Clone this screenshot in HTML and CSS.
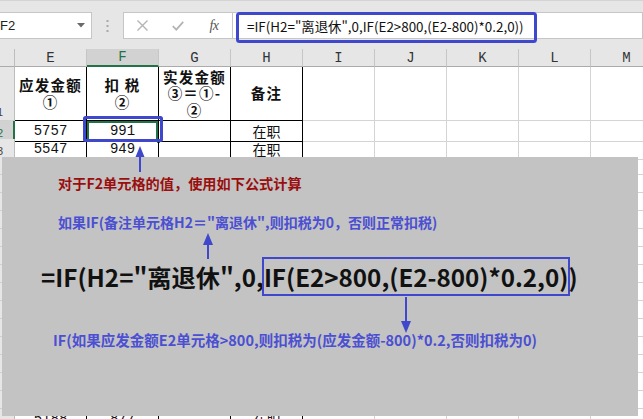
FILE: index.html
```html
<!DOCTYPE html>
<html lang="zh">
<head>
<meta charset="utf-8">
<title>Excel formula</title>
<link rel="stylesheet" href="styles.css">
</head>
<body>
<div class="toolbar">
  <div class="namebox"><span class="nb-text">F2</span>
    <svg class="caret" width="8" height="5" viewBox="0 0 8 5"><path d="M0 0H8L4 4.5Z" fill="#6a6a6a"/></svg>
  </div>
  <div class="sep"><svg width="3" height="12" viewBox="0 0 3 12"><rect x="0.5" y="0" width="2" height="2" fill="#a8a8a8"/><rect x="0.5" y="5" width="2" height="2" fill="#a8a8a8"/><rect x="0.5" y="10" width="2" height="2" fill="#a8a8a8"/></svg></div>
  <div class="fbtns">
    <span class="btn"><svg width="11" height="11" viewBox="0 0 11 11"><path d="M0.5 0.5L10.5 10.5M10.5 0.5L0.5 10.5" stroke="#b4b4b4" stroke-width="1.4"/></svg></span>
    <span class="btn"><svg width="12" height="10" viewBox="0 0 12 10"><path d="M0.8 5.2L4.3 8.6L11.2 0.8" stroke="#b4b4b4" stroke-width="1.8" fill="none"/></svg></span>
    <span class="btn fx">fx</span>
  </div>
  <div class="fbar"><span class="ftext">=IF(H2="离退休",0,IF(E2&gt;800,(E2-800)*0.2,0))</span></div>
</div>

<div class="sheet">
  <div class="row hdr">
    <div class="rh"></div>
    <div class="ch">E</div><div class="ch sel">F</div><div class="ch">G</div><div class="ch">H</div><div class="ch">I</div><div class="ch">J</div><div class="ch">K</div><div class="ch">L</div><div class="ch">M</div>
  </div>
  <div class="row r1">
    <div class="rh"><span>1</span></div>
    <div class="c t th"><span>应发金额</span><span>①</span></div>
    <div class="c t th"><span>扣&nbsp;税</span><span>②</span></div>
    <div class="c t th th3"><span>实发金额</span><span>③＝①-</span><span>②</span></div>
    <div class="c t th"><span>备注</span></div>
    <div class="c"></div><div class="c"></div><div class="c"></div><div class="c"></div><div class="c"></div>
  </div>
  <div class="row">
    <div class="rh rsel"><span>2</span></div>
    <div class="c t num">5757</div><div class="c t num cur">991<i class="handle"></i></div><div class="c t"></div><div class="c t cj">在职</div>
    <div class="c"></div><div class="c"></div><div class="c"></div><div class="c"></div><div class="c"></div>
  </div>
  <div class="row">
    <div class="rh"><span>3</span></div>
    <div class="c t num">5547</div><div class="c t num">949</div><div class="c t"></div><div class="c t cj">在职</div>
    <div class="c"></div><div class="c"></div><div class="c"></div><div class="c"></div><div class="c"></div>
  </div>
  <div class="row"><div class="rh"></div><div class="c t"></div><div class="c t"></div><div class="c t"></div><div class="c t"></div><div class="c"></div><div class="c"></div><div class="c"></div><div class="c"></div><div class="c"></div></div>
  <div class="row"><div class="rh"></div><div class="c t"></div><div class="c t"></div><div class="c t"></div><div class="c t"></div><div class="c"></div><div class="c"></div><div class="c"></div><div class="c"></div><div class="c"></div></div>
  <div class="row"><div class="rh"></div><div class="c t"></div><div class="c t"></div><div class="c t"></div><div class="c t"></div><div class="c"></div><div class="c"></div><div class="c"></div><div class="c"></div><div class="c"></div></div>
  <div class="row"><div class="rh"></div><div class="c t"></div><div class="c t"></div><div class="c t"></div><div class="c t"></div><div class="c"></div><div class="c"></div><div class="c"></div><div class="c"></div><div class="c"></div></div>
  <div class="row"><div class="rh"></div><div class="c t"></div><div class="c t"></div><div class="c t"></div><div class="c t"></div><div class="c"></div><div class="c"></div><div class="c"></div><div class="c"></div><div class="c"></div></div>
  <div class="row"><div class="rh"></div><div class="c t"></div><div class="c t"></div><div class="c t"></div><div class="c t"></div><div class="c"></div><div class="c"></div><div class="c"></div><div class="c"></div><div class="c"></div></div>
  <div class="row"><div class="rh"></div><div class="c t"></div><div class="c t"></div><div class="c t"></div><div class="c t"></div><div class="c"></div><div class="c"></div><div class="c"></div><div class="c"></div><div class="c"></div></div>
  <div class="row"><div class="rh"></div><div class="c t"></div><div class="c t"></div><div class="c t"></div><div class="c t"></div><div class="c"></div><div class="c"></div><div class="c"></div><div class="c"></div><div class="c"></div></div>
  <div class="row"><div class="rh"></div><div class="c t"></div><div class="c t"></div><div class="c t"></div><div class="c t"></div><div class="c"></div><div class="c"></div><div class="c"></div><div class="c"></div><div class="c"></div></div>
  <div class="row"><div class="rh"></div><div class="c t"></div><div class="c t"></div><div class="c t"></div><div class="c t"></div><div class="c"></div><div class="c"></div><div class="c"></div><div class="c"></div><div class="c"></div></div>
  <div class="row"><div class="rh"></div><div class="c t"></div><div class="c t"></div><div class="c t"></div><div class="c t"></div><div class="c"></div><div class="c"></div><div class="c"></div><div class="c"></div><div class="c"></div></div>
  <div class="row"><div class="rh"></div><div class="c t"></div><div class="c t"></div><div class="c t"></div><div class="c t"></div><div class="c"></div><div class="c"></div><div class="c"></div><div class="c"></div><div class="c"></div></div>
  <div class="row"><div class="rh"></div><div class="c t"></div><div class="c t"></div><div class="c t"></div><div class="c t"></div><div class="c"></div><div class="c"></div><div class="c"></div><div class="c"></div><div class="c"></div></div>
  <div class="row"><div class="rh"></div><div class="c t"></div><div class="c t"></div><div class="c t"></div><div class="c t"></div><div class="c"></div><div class="c"></div><div class="c"></div><div class="c"></div><div class="c"></div></div>
  <div class="row"><div class="rh"></div><div class="c t num">5188</div><div class="c t num">877</div><div class="c t"></div><div class="c t cj">在职</div><div class="c"></div><div class="c"></div><div class="c"></div><div class="c"></div><div class="c"></div></div>
</div>

<div class="overlay">
  <p class="note1">对于F2单元格的值，使用如下公式计算</p>
  <p class="note2">如果IF(备注单元格H2＝"离退休",则扣税为0，否则正常扣税)</p>
  <p class="big">=IF(H2="离退休",0,<span class="hl">IF(E2&gt;800,(E2-800)*0.2,0)</span>)</p>
  <p class="note4">IF(如果应发金额E2单元格&gt;800,则扣税为(应发金额-800)*0.2,否则扣税为0)</p>
</div>

<svg class="marks" width="643" height="419" viewBox="0 0 643 419">
  <rect x="237.5" y="13.5" width="298" height="28" rx="2" fill="none" stroke="#3f48cc" stroke-width="3"/>
  <rect x="84.5" y="117.5" width="77" height="23" rx="1" fill="none" stroke="#3f48cc" stroke-width="3"/>
  <path d="M140 154V172" stroke="#3f48cc" stroke-width="2"/>
  <path d="M140 146L135.5 157H144.5Z" fill="#3f48cc"/>
  <path d="M208 242V259" stroke="#3f48cc" stroke-width="2"/>
  <path d="M208 233L203 245H213Z" fill="#3f48cc"/>
  <path d="M406 297V322" stroke="#3f48cc" stroke-width="2"/>
  <path d="M406 333L401 321H411Z" fill="#3f48cc"/>
</svg>
</body>
</html>
```

FILE: styles.css
```css
* { box-sizing: border-box; margin: 0; padding: 0; }
html, body { width: 643px; height: 419px; overflow: hidden; }
body {
  position: relative;
  background: #e6e6e6;
  font-family: "Noto Sans CJK SC", "Liberation Sans", sans-serif;
  color: #111;
}

/* ---------- formula toolbar ---------- */
.toolbar {
  height: 49px;
  display: flex;
  align-items: flex-start;
  padding-top: 11px;
  border-top: 1px solid #d4d4d4;
}
.namebox {
  margin-left: -20px;
  width: 112px;
  height: 27px;
  background: #fff;
  border: 1px solid #c6c6c6;
  display: flex;
  align-items: center;
  padding-left: 19px;
  font: 13px "Liberation Sans", sans-serif;
  color: #222;
}
.caret { margin-left: auto; margin-right: 6px; }
.sep {
  width: 31px;
  height: 27px;
  display: flex;
  align-items: center;
  justify-content: center;
}
.fbtns {
  width: 110px;
  height: 27px;
  background: #fff;
  border: 1px solid #c6c6c6;
  display: grid;
  grid-template-columns: 36px 36px 36px;
  align-items: center;
}
.btn { display: flex; justify-content: center; align-items: center; height: 25px; }
.fx {
  font: italic 14px "Liberation Serif", serif;
  color: #555;
  letter-spacing: -0.5px;
}
.fbar {
  flex: 1;
  height: 27px;
  background: #fff;
  border: 1px solid #c6c6c6;
  border-left: none;
  display: flex;
  align-items: center;
  padding-left: 14px;
  white-space: nowrap;
}
.ftext { font: 13.4px "Noto Sans CJK SC", sans-serif; color: #111; }

/* ---------- sheet grid ---------- */
.sheet { background: #fff; }
.row {
  display: grid;
  grid-template-columns: 15px repeat(9, 72px);
  height: 18px;
}
.row.hdr { height: 18px; background: #e6e6e6; }
.row.r1 { height: 54px; }

.rh {
  background: #e6e6e6;
  border-right: 1px solid #bdbdbd;
  border-bottom: 1px solid #d0d0d0;
  display: flex;
  justify-content: flex-end;
  align-items: flex-end;
  padding-right: 11px;
  font: 11px/16px "Liberation Sans", sans-serif;
  color: #444;
  white-space: nowrap;
}
.hdr .rh { border-bottom: 1px solid #ababab; }
.rh.rsel {
  background: #d2d2d2;
  color: #217346;
  border-right: 2px solid #217346;
  padding-right: 10px;
}

.ch {
  border-right: 1px solid #c6c6c6;
  border-bottom: 1px solid #ababab;
  display: flex;
  justify-content: center;
  align-items: center;
  font: 14px "Liberation Mono", monospace;
  color: #333;
}
.ch.sel {
  background: #d2d2d2;
  color: #217346;
  border-bottom: 2px solid #217346;
}

.c {
  border-right: 1px solid #d4d4d4;
  border-bottom: 1px solid #d4d4d4;
  display: flex;
  align-items: center;
  justify-content: center;
  white-space: nowrap;
  position: relative;
}
.c.t { border-color: #000; }
.th {
  flex-direction: column;
  font: 700 14.5px/16px "Noto Sans CJK SC", sans-serif;
  letter-spacing: 1.2px;
  text-align: center;
}
.th span { display: block; height: 16.5px; }
.num { font: 14px "Liberation Mono", monospace; color: #111; }
.cj { font: 14px "Noto Sans CJK SC", sans-serif; color: #111; }
.cur { box-shadow: inset 0 0 0 2px #217346; }
.handle {
  position: absolute;
  right: -3px;
  bottom: -3px;
  width: 5px;
  height: 5px;
  background: #217346;
  border: 1px solid #fff;
}

/* ---------- pasted annotation picture ---------- */
.overlay {
  position: absolute;
  left: 2px;
  top: 157px;
  width: 636px;
  height: 259px;
  background: #c3c3c3;
  padding-top: 16px;
  white-space: nowrap;
}
.note1 {
  margin-left: 56px;
  font: 700 14.2px/20px "Noto Sans CJK SC", sans-serif;
  color: #9a0e0e;
}
.note2 {
  margin: 19px 0 0 56px;
  font: 700 14px/20px "Noto Sans CJK SC", sans-serif;
  color: #4b4fd2;
}
.big {
  margin: 27px 0 0 39px;
  font: 700 24.2px/36px "Noto Sans CJK SC", sans-serif;
  color: #111;
}
.hl {
  display: inline-block;
  line-height: 35px;
  outline: 2px solid #3f48cc;
  outline-offset: 0;
}
.note4 {
  margin: 35px 0 0 51px;
  font: 700 14.5px/20px "Noto Sans CJK SC", sans-serif;
  color: #4b4fd2;
}

.marks {
  position: absolute;
  left: 0;
  top: 0;
  pointer-events: none;
}
```
